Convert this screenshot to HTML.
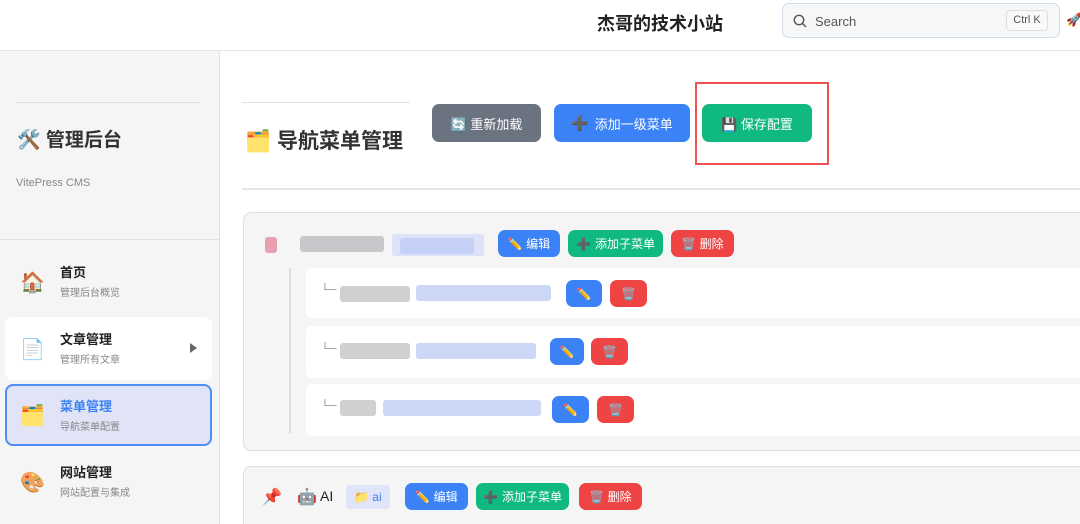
<!DOCTYPE html>
<html style="width:1080px;height:524px;overflow:hidden"><head><meta charset="utf-8"><style>
*{box-sizing:border-box;margin:0;padding:0}
body{width:1080px;height:524px;overflow:hidden;background:#fff;font-family:"Liberation Sans","Noto Sans CJK SC",sans-serif;position:relative;color:#222}
.a{position:absolute}
.btn{position:absolute;color:#fff;border-radius:7px;font-size:13px;display:flex;align-items:center;justify-content:center;gap:6px}
.sb{position:absolute;color:#fff;border-radius:7px;font-size:12px;display:flex;align-items:center;justify-content:center;gap:4px}
.blue{background:#3b82f6}.green{background:#10b981}.red{background:#ef4444}.gray{background:#6b7280}
.blur{position:absolute;height:16px;border-radius:3px}
.row{position:absolute;left:306px;width:780px;background:#fff;border-radius:6px}
.nt{font-size:13px;font-weight:bold;color:#222;line-height:16px}.ns{font-size:10px;color:#888;margin-top:6px;line-height:13px}
</style></head><body>
<div class="a" style="left:0;top:0;width:1080px;height:51px;border-bottom:1px solid #e5e5e5;background:#fff"></div>
<div class="a" style="left:597px;top:10px;font-size:18px;font-weight:bold;color:#222">杰哥的技术小站</div>
<div class="a" style="left:782px;top:3px;width:278px;height:35px;border:1.5px solid #d3dbe7;border-radius:7px;background:#f6f7f9"></div>
<svg class="a" style="left:793px;top:14px" width="14" height="14" viewBox="0 0 14 14"><circle cx="6" cy="6" r="4.7" fill="none" stroke="#555" stroke-width="1.4"/><line x1="9.5" y1="9.5" x2="13" y2="13" stroke="#555" stroke-width="1.4"/></svg>
<div class="a" style="left:815px;top:14px;font-size:13px;color:#555">Search</div>
<div class="a" style="left:1006px;top:10px;width:42px;height:21px;border:1px solid #ddd;border-radius:4px;font-size:11px;color:#555;text-align:center;line-height:19px;background:#f9f9f9">Ctrl K</div>
<div class="a" style="left:1066px;top:12px;font-size:13px">🚀</div>
<div class="a" style="left:0;top:51px;width:220px;height:473px;background:#f5f5f5;border-right:1px solid #e2e2e2"></div>
<div class="a" style="left:16px;top:102px;width:184px;height:1px;background:#e2e2e2"></div>
<div class="a" style="left:17px;top:127px;font-size:19px;font-weight:bold;color:#333;line-height:28px">🛠️ 管理后台</div>
<div class="a" style="left:16px;top:177px;font-size:11px;color:#888">VitePress CMS</div>
<div class="a" style="left:0;top:239px;width:220px;height:1px;background:#e2e2e2"></div>
<div class="a" style="left:20px;top:270px;font-size:20px">🏠</div>
<div class="a" style="left:60px;top:265px"><div class="nt">首页</div><div class="ns">管理后台概览</div></div>
<div class="a" style="left:5px;top:317px;width:207px;height:63px;background:#fff;border-radius:8px"></div>
<div class="a" style="left:20px;top:337px;font-size:20px">📄</div>
<div class="a" style="left:60px;top:332px"><div class="nt">文章管理</div><div class="ns">管理所有文章</div></div>
<div class="a" style="left:190px;top:343px;width:0;height:0;border-left:7px solid #666;border-top:5px solid transparent;border-bottom:5px solid transparent"></div>
<div class="a" style="left:5px;top:384px;width:207px;height:62px;background:#e1e3f6;border:2px solid #4f8ef5;border-radius:8px"></div>
<div class="a" style="left:20px;top:403px;font-size:20px">🗂️</div>
<div class="a" style="left:60px;top:399px"><div class="nt" style="color:#3b82f6">菜单管理</div><div class="ns">导航菜单配置</div></div>
<div class="a" style="left:20px;top:470px;font-size:20px">🎨</div>
<div class="a" style="left:60px;top:465px"><div class="nt">网站管理</div><div class="ns">网站配置与集成</div></div>
<div class="a" style="left:242px;top:102px;width:168px;height:1px;background:#e2e2e2"></div>
<div class="a" style="left:245px;top:127px;font-size:21px;font-weight:bold;color:#333;line-height:30px">🗂️ 导航菜单管理</div>
<div class="btn gray" style="left:432px;top:104px;width:109px;height:38px">🔄 重新加载</div>
<div class="btn blue" style="left:554px;top:104px;width:136px;height:38px"><span style="color:#6b5ea8;font-size:14px">➕</span> 添加一级菜单</div>
<div class="btn green" style="left:702px;top:104px;width:110px;height:38px">💾 保存配置</div>
<div class="a" style="left:695px;top:82px;width:134px;height:83px;border:2px solid #f05252"></div>
<div class="a" style="left:242px;top:188px;width:838px;height:2px;background:#e6e6e6"></div>
<div class="a" style="left:243px;top:212px;width:850px;height:239px;background:#f5f5f5;border:1px solid #ddd;border-radius:8px"></div>
<div class="blur" style="left:265px;top:237px;width:12px;background:#e8a0b0"></div>
<div class="blur" style="left:300px;top:236px;width:84px;background:#c8c8cc"></div>
<div class="blur" style="left:392px;top:234px;width:92px;height:22px;background:#dde2f8"></div>
<div class="blur" style="left:400px;top:238px;width:74px;background:#c4d0f5"></div>
<div class="sb blue" style="left:498px;top:230px;width:62px;height:27px">✏️ 编辑</div>
<div class="sb green" style="left:568px;top:230px;width:95px;height:27px"><span style="color:#6b5ea8">➕</span> 添加子菜单</div>
<div class="sb red" style="left:671px;top:230px;width:63px;height:27px">🗑️ 删除</div>
<div class="a" style="left:289px;top:268px;width:2px;height:165px;background:#ddd"></div>
<div class="row" style="top:268px;height:50px"></div>
<div class="row" style="top:326px;height:52px"></div>
<div class="row" style="top:384px;height:52px"></div>
<div class="a" style="left:321px;top:284px;font-size:11px;color:#888">└─</div>
<div class="blur" style="left:340px;top:286px;width:70px;background:#d0d0d2"></div>
<div class="blur" style="left:416px;top:285px;width:135px;background:#cdd7f7"></div>
<div class="sb blue" style="left:566px;top:280px;width:36px;height:27px">✏️</div>
<div class="sb red" style="left:610px;top:280px;width:37px;height:27px">🗑️</div>
<div class="a" style="left:321px;top:343px;font-size:11px;color:#888">└─</div>
<div class="blur" style="left:340px;top:343px;width:70px;background:#d0d0d2"></div>
<div class="blur" style="left:416px;top:343px;width:120px;background:#cdd7f7"></div>
<div class="sb blue" style="left:550px;top:338px;width:34px;height:27px">✏️</div>
<div class="sb red" style="left:591px;top:338px;width:37px;height:27px">🗑️</div>
<div class="a" style="left:321px;top:400px;font-size:11px;color:#888">└─</div>
<div class="blur" style="left:340px;top:400px;width:36px;background:#d0d0d2"></div>
<div class="blur" style="left:383px;top:400px;width:158px;background:#cdd7f7"></div>
<div class="sb blue" style="left:552px;top:396px;width:37px;height:27px">✏️</div>
<div class="sb red" style="left:597px;top:396px;width:37px;height:27px">🗑️</div>
<div class="a" style="left:243px;top:466px;width:850px;height:80px;background:#f5f5f5;border:1px solid #ddd;border-radius:8px"></div>
<div class="a" style="left:262px;top:487px;font-size:16px">📌</div>
<div class="a" style="left:297px;top:487px;font-size:16px">🤖</div>
<div class="a" style="left:320px;top:488px;font-size:14px;color:#222">AI</div>
<div class="a" style="left:346px;top:485px;width:44px;height:24px;background:#e1e3f6;border-radius:4px;font-size:12px;color:#3b82f6;line-height:24px;padding-left:8px">📁 ai</div>
<div class="sb blue" style="left:405px;top:483px;width:63px;height:27px">✏️ 编辑</div>
<div class="sb green" style="left:476px;top:483px;width:93px;height:27px"><span style="color:#6b5ea8">➕</span> 添加子菜单</div>
<div class="sb red" style="left:579px;top:483px;width:63px;height:27px">🗑️ 删除</div>
</body></html>
